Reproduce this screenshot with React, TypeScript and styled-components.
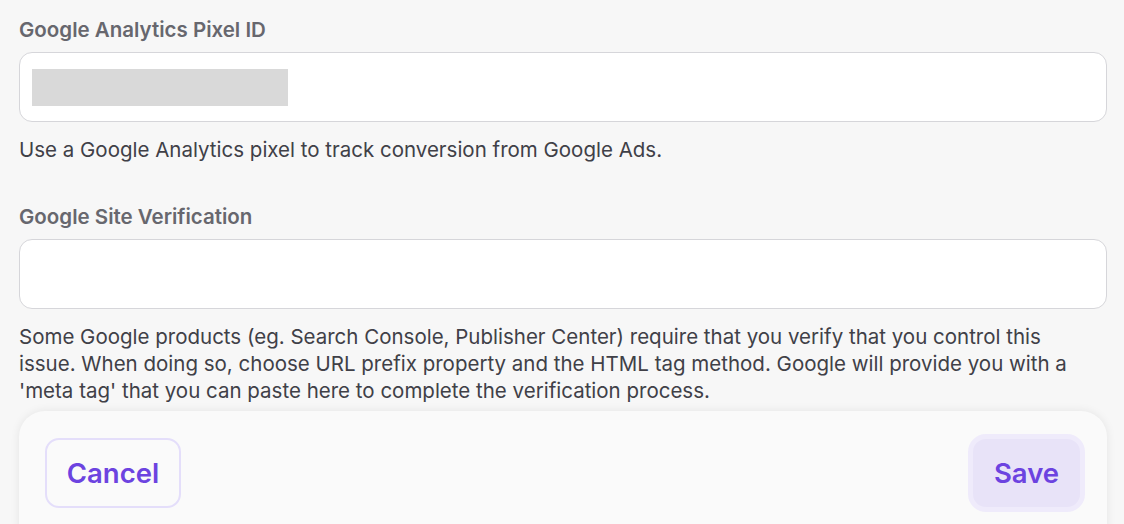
import styled, { createGlobalStyle } from "styled-components";

const GlobalStyle = createGlobalStyle`
  html, body {
    margin: 0;
    padding: 0;
    background: #f7f7f7;
    font-family: Inter, "Noto Sans", sans-serif;
  }
`;

const Page = styled.div`
  width: 1124px;
  height: 524px;
  overflow: hidden;
  padding: 18px 17px 0 19px;
  box-sizing: border-box;
`;

const Field = styled.div<{ gapAfter: number }>`
  display: flex;
  flex-direction: column;
  margin-bottom: ${({ gapAfter }) => `${gapAfter}px`};
`;

const Label = styled.label`
  font-size: 20.5px;
  line-height: 24px;
  font-weight: 600;
  color: #67676e;
  margin-bottom: 10px;
`;

const InputBox = styled.div`
  height: 70px;
  box-sizing: border-box;
  background: #ffffff;
  border: 1.5px solid #d6d6da;
  border-radius: 13px;
  display: flex;
  align-items: center;
  padding-left: 12px;
`;

const Redacted = styled.div`
  width: 256px;
  height: 37px;
  background: #d9d9d9;
`;

const Help = styled.p<{ top: number; lh: number }>`
  margin: ${({ top }) => `${top}px`} 0 0 0;
  max-width: 1064px;
  font-size: 20.5px;
  line-height: ${({ lh }) => `${lh}px`};
  color: #404047;
`;

const Footer = styled.div`
  margin-top: 7px;
  height: 140px;
  background: #fafafa;
  border-radius: 26px;
  box-shadow: 0 0 10px rgba(0, 0, 0, 0.08);
  display: flex;
  justify-content: space-between;
  align-items: flex-start;
  padding: 27px 22px 0 26px;
  box-sizing: border-box;
`;

const Button = styled.button<{ primary?: boolean }>`
  font-family: Inter, "Noto Sans", sans-serif;
  font-size: 27.5px;
  font-weight: 600;
  color: #6c43e0;
  box-sizing: border-box;
  cursor: pointer;
  padding: 0;
  ${({ primary }) =>
    primary
      ? `
    margin-top: -4px;
    width: 117px;
    height: 78px;
    background: #e8e3f8;
    border: 5px solid #efebfb;
    border-radius: 18px;
  `
      : `
    width: 136px;
    height: 70px;
    background: #fafafa;
    border: 2px solid #e4defa;
    border-radius: 14px;
  `}
`;

export default function App() {
  return (
    <>
      <GlobalStyle />
      <Page>
        <Field gapAfter={43}>
          <Label>Google Analytics Pixel ID</Label>
          <InputBox>
            <Redacted />
          </InputBox>
          <Help top={16} lh={24}>
            Use a Google Analytics pixel to track conversion from Google Ads.
          </Help>
        </Field>
        <Field gapAfter={0}>
          <Label>Google Site Verification</Label>
          <InputBox />
          <Help top={14} lh={27}>
            Some Google products (eg. Search Console, Publisher Center) require
            that you verify that you control this issue. When doing so, choose
            URL prefix property and the HTML tag method. Google will provide
            you with a 'meta tag' that you can paste here to complete the
            verification process.
          </Help>
        </Field>
        <Footer>
          <Button>Cancel</Button>
          <Button primary>Save</Button>
        </Footer>
      </Page>
    </>
  );
}
